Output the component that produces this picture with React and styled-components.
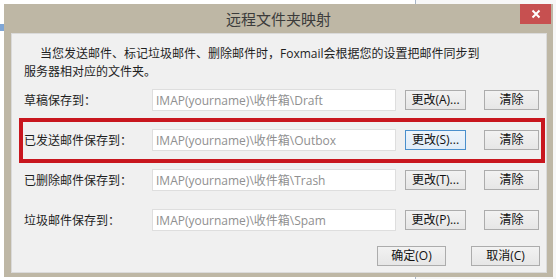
import React from 'react';
import styled, { createGlobalStyle } from 'styled-components';

const Global = createGlobalStyle`
  html, body { margin: 0; padding: 0; }
  body {
    width: 556px;
    height: 279px;
    overflow: hidden;
    background: #f2f2f2;
    font-family: "Open Sans", "Noto Sans CJK SC", sans-serif;
  }
`;

const Desktop = styled.div`
  position: relative;
  width: 556px;
  height: 279px;
  overflow: hidden;
  background: #f2f3f5;
`;

const BackPane = styled.div`
  display: flex;
  height: 100%;
`;

const FolderList = styled.div`
  width: 415px;
  background: #fff;
  border-right: 1px solid #a8b6c8;
  display: flex;
  flex-direction: column;
`;

const FolderRow = styled.div`
  display: flex;
  align-items: center;
  gap: 5px;
  height: 18px;
  margin-top: ${(p) => p.$offset || 0}px;
  font-size: 13px;
  color: #111;
  font-family: "Liberation Sans", sans-serif;
`;

const ReadingPane = styled.div`
  flex: 1;
  background: #f7f7f7;
`;

const Win = styled.div`
  position: absolute;
  left: 4px;
  top: 4px;
  width: 549px;
  height: 273px;
  box-sizing: border-box;
  background: #beb7a5;
  display: flex;
  flex-direction: column;
`;

const TitleBar = styled.div`
  position: relative;
  height: 29px;
  display: flex;
  align-items: center;
  justify-content: center;
  font-family: "Noto Sans CJK SC", sans-serif;
  font-size: 15px;
  color: #3b3b3b;
`;

const CloseButton = styled.div`
  position: absolute;
  top: 0;
  right: 2px;
  width: 31px;
  height: 20px;
  background: #c75050;
  display: flex;
  align-items: center;
  justify-content: center;
`;

const Panel = styled.div`
  flex: 1;
  margin: 0 6px 4px 7px;
  background: #f0f0f0;
  border: 1px solid #dadada;
  padding: 11px 6px 6px 12px;
  display: flex;
  flex-direction: column;
  font-size: 12px;
  color: #1e1e1e;
`;

const Intro = styled.p`
  margin: 0;
  line-height: 18px;
  text-indent: 16px;
  white-space: nowrap;
`;

const Form = styled.div`
  margin-top: 8px;
  display: flex;
  flex-direction: column;
  align-items: flex-start;
  gap: 18px;
`;

const Row = styled.div`
  position: relative;
  display: flex;
  align-items: center;
  height: 22px;
  ${(p) =>
    p.$highlight &&
    `
    &::after {
      content: "";
      position: absolute;
      top: -11px;
      bottom: -12px;
      left: -5px;
      right: -6px;
      border: 4px solid #c8161e;
      pointer-events: none;
    }
  `}
`;

const Label = styled.span`
  width: 128px;
  white-space: nowrap;
`;

const PathField = styled.div`
  width: 244px;
  height: 22px;
  box-sizing: border-box;
  background: #fff;
  border: 1px solid #dedede;
  padding: 0 3px;
  display: flex;
  align-items: center;
  font-size: 12px;
  color: #8f8f8f;
  white-space: nowrap;
`;

const Button = styled.button`
  box-sizing: border-box;
  width: ${(p) => p.$w}px;
  height: 20px;
  margin-left: ${(p) => p.$gap || 0}px;
  padding: 0;
  font-family: "Open Sans", "Noto Sans CJK SC", sans-serif;
  font-size: 12px;
  color: #111;
  border: 1px solid ${(p) => (p.$focus ? '#4a8fcc' : '#acacac')};
  background: ${(p) =>
    p.$focus
      ? 'linear-gradient(#edf4fb, #e0ecf8)'
      : 'linear-gradient(#f2f2f2, #e6e6e6)'};
  display: flex;
  align-items: center;
  justify-content: center;
  line-height: 1;
`;

const Footer = styled.div`
  margin-top: 15px;
  display: flex;
  justify-content: flex-end;
  gap: 25px;
`;

const rows = [
  { label: '草稿保存到：', path: 'IMAP(yourname)\\收件箱\\Draft', key: 'A' },
  { label: '已发送邮件保存到：', path: 'IMAP(yourname)\\收件箱\\Outbox', key: 'S', highlight: true },
  { label: '已删除邮件保存到：', path: 'IMAP(yourname)\\收件箱\\Trash', key: 'T' },
  { label: '垃圾邮件保存到：', path: 'IMAP(yourname)\\收件箱\\Spam', key: 'P' },
];

export default function App() {
  return (
    <>
      <Global />
      <Desktop>
        <BackPane>
          <FolderList>
            <FolderRow $offset={-14}>
              <svg width="9" height="9" viewBox="0 0 9 9">
                <rect x="0" y="1" width="9" height="8" fill="#e8a23a" />
              </svg>
              Outbox
            </FolderRow>
            <FolderRow $offset={14}>
              <svg width="9" height="9" viewBox="0 0 9 9">
                <rect x="0" y="1" width="9" height="7" fill="#7fa6d6" />
              </svg>
            </FolderRow>
          </FolderList>
          <ReadingPane />
        </BackPane>
        <Win>
          <TitleBar>
            远程文件夹映射
            <CloseButton>
              <svg width="10" height="10" viewBox="0 0 10 10">
                <path d="M1.5 1.5 L8.5 8.5 M8.5 1.5 L1.5 8.5" stroke="#fff" strokeWidth="2" />
              </svg>
            </CloseButton>
          </TitleBar>
          <Panel>
            <Intro>
              当您发送邮件、标记垃圾邮件、删除邮件时，Foxmail会根据您的设置把邮件同步到
              <br />
              服务器相对应的文件夹。
            </Intro>
            <Form>
              {rows.map((r) => (
                <Row key={r.key} $highlight={r.highlight}>
                  <Label>{r.label}</Label>
                  <PathField>{r.path}</PathField>
                  <Button $w={61} $gap={9} $focus={r.highlight}>
                    更改({r.key})...
                  </Button>
                  <Button $w={55} $gap={18}>清除</Button>
                </Row>
              ))}
            </Form>
            <Footer>
              <Button $w={69}>确定(O)</Button>
              <Button $w={69}>取消(C)</Button>
            </Footer>
          </Panel>
        </Win>
      </Desktop>
    </>
  );
}
